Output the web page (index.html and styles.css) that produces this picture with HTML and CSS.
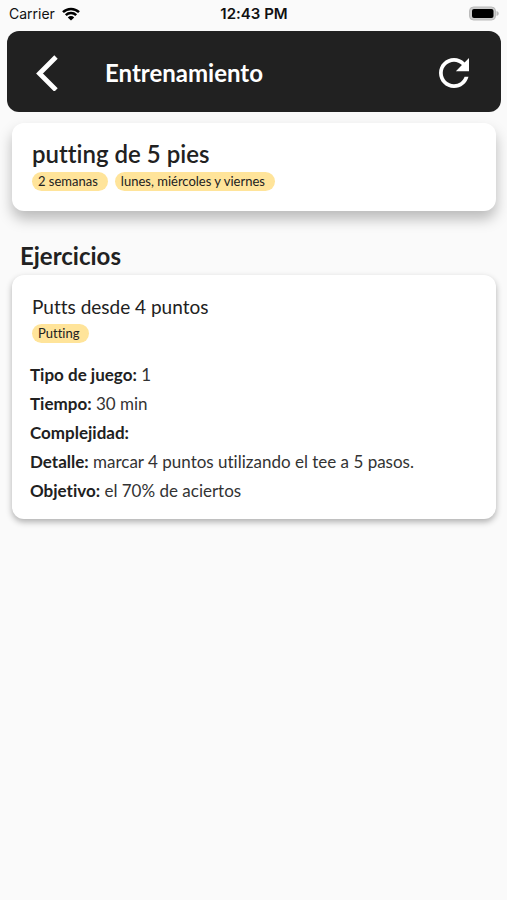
FILE: index.html
```html
<!DOCTYPE html>
<html lang="es">
<head>
<meta charset="utf-8">
<meta name="viewport" content="width=device-width, initial-scale=1">
<title>Entrenamiento</title>
<link rel="stylesheet" href="styles.css">
</head>
<body>
<div class="status">
  <div class="status-carrier">
    <span>Carrier</span>
    <svg class="wifi" viewBox="0 0 18 14" aria-hidden="true">
      <path d="M1 5.2a11.4 11.4 0 0 1 16 0M3.8 8.2a7.4 7.4 0 0 1 10.4 0" fill="none" stroke="#000" stroke-width="2.5"/>
      <path d="M9 13.6 5.800 10.400a4.600 4.600 0 0 1 6.400 0z"/>
    </svg>
  </div>
  <span class="status-time">12:43 PM</span>
  <div class="status-power">
    <svg class="battery" viewBox="0 0 31 15" aria-hidden="true">
      <rect x="1.500" y="1" width="26" height="13" rx="4" fill="#ccc" stroke="#bbb"/>
      <rect x="4" y="3" width="21.500" height="9" rx="2"/>
      <path d="M28.500 5c3 1 3 4 0 5z" fill="#bbb"/>
    </svg>
  </div>
</div>
<header class="bar">
  <button class="icon-button" type="button" aria-label="Volver">
    <svg class="icon-back" viewBox="0 0 24 36" aria-hidden="true"><path d="M21 2 4.500 18.500 21 35" fill="none" stroke="#fff" stroke-width="4.800"/></svg>
  </button>
  <h1 class="bar-title">Entrenamiento</h1>
  <button class="icon-button" type="button" aria-label="Actualizar">
    <svg class="icon-refresh" viewBox="4 4 16 16" aria-hidden="true"><path fill="#fff" d="M17.650 6.350C16.200 4.900 14.210 4 12 4c-4.420 0-7.990 3.580-7.990 8s3.570 8 7.990 8c3.730 0 6.840-2.550 7.730-6h-2.080c-.82 2.330-3.040 4-5.650 4-3.310 0-6-2.690-6-6s2.690-6 6-6c1.660 0 3.140.69 4.220 1.780L13 11h7V4l-2.350 2.350z"/></svg>
  </button>
</header>
<main class="content">
  <section class="card card-plan">
    <h2 class="title">putting de 5 pies</h2>
    <div class="tags">
      <span class="tag">2 semanas</span>
      <span class="tag">lunes, miércoles y viernes</span>
    </div>
  </section>
  <h2 class="title section-title">Ejercicios</h2>
  <article class="card card-exercise">
    <h3 class="exercise-title">Putts desde 4 puntos</h3>
    <div class="tags"><span class="tag">Putting</span></div>
    <dl class="details">
      <div><dt>Tipo de juego:</dt> <dd>1</dd></div>
      <div><dt>Tiempo:</dt> <dd>30 min</dd></div>
      <div><dt>Complejidad:</dt> <dd></dd></div>
      <div><dt>Detalle:</dt> <dd>marcar 4 puntos utilizando el tee a 5 pasos.</dd></div>
      <div><dt>Objetivo:</dt> <dd>el 70% de aciertos</dd></div>
    </dl>
  </article>
</main>
</body>
</html>
```
FILE: styles.css
```css
* {
  box-sizing: border-box;
}

body,
h1,
h2,
h3,
dl,
dd {
  margin: 0;
}

body {
  background: #fafafa;
  color: #212121;
  font-family: Lato, sans-serif;
  font-variant-ligatures: none;
}

.status {
  display: grid;
  grid-template-columns: 1fr auto 1fr;
  align-items: center;
  height: 31px;
  padding: 0 8px 4px 9px;
  color: #111;
  font-family: Inter, sans-serif;
  font-size: 14px;
  line-height: 20px;
}

.status-carrier {
  display: flex;
  align-items: center;
  gap: 7px;
}

.wifi {
  width: 18px;
  height: 14px;
}

.status-time {
  font-size: 15px;
  font-weight: 600;
}

.status-power {
  display: flex;
  justify-content: flex-end;
}

.battery {
  width: 31px;
  height: 15px;
}

.bar {
  display: flex;
  align-items: center;
  height: 81px;
  margin: 0 6px 0 7px;
  padding: 3px 27px 0 20px;
  border-radius: 12px;
  background: #212121;
  color: #fff;
}

.icon-button {
  display: grid;
  place-items: center;
  width: 40px;
  height: 40px;
  padding: 0;
  border: 0;
  background: none;
}

.icon-back {
  width: 24px;
  height: 36px;
}

.icon-refresh {
  width: 30px;
  height: 30px;
}

.bar-title {
  flex: 1;
  padding-left: 38px;
  font-size: 24px;
  line-height: 32px;
  font-weight: 700;
}

.content {
  padding: 11px 11px 24px 12px;
}

.card {
  border-radius: 12px;
  background: #fff;
}

.card-plan {
  padding: 15px 20px 20px;
  box-shadow: 0 8px 14px rgba(0, 0, 0, 0.26);
}

.title {
  font-size: 24px;
  line-height: 32px;
  font-weight: 600;
}

.section-title {
  padding: 29px 8px 3px;
  font-weight: 700;
}

.tags {
  display: flex;
  flex-wrap: wrap;
  gap: 7px;
  padding-top: 2px;
}

.tag {
  padding: 0 10px 0 6px;
  border-radius: 10px;
  background: #ffe49a;
  font-size: 13px;
  line-height: 19px;
}

.card-exercise {
  padding: 17px 18px 14px;
  box-shadow: 0 3px 6px rgba(0, 0, 0, 0.3);
}

.card-exercise .tags,
.exercise-title {
  margin-left: 2px;
}

.exercise-title {
  font-size: 19px;
  line-height: 30px;
  font-weight: 400;
}

.details {
  padding-top: 17px;
  font-size: 17px;
  line-height: 29px;
}

.details dt,
.details dd {
  display: inline;
}

.details dt {
  font-weight: 700;
}

.details dd {
  color: #333;
}
```
